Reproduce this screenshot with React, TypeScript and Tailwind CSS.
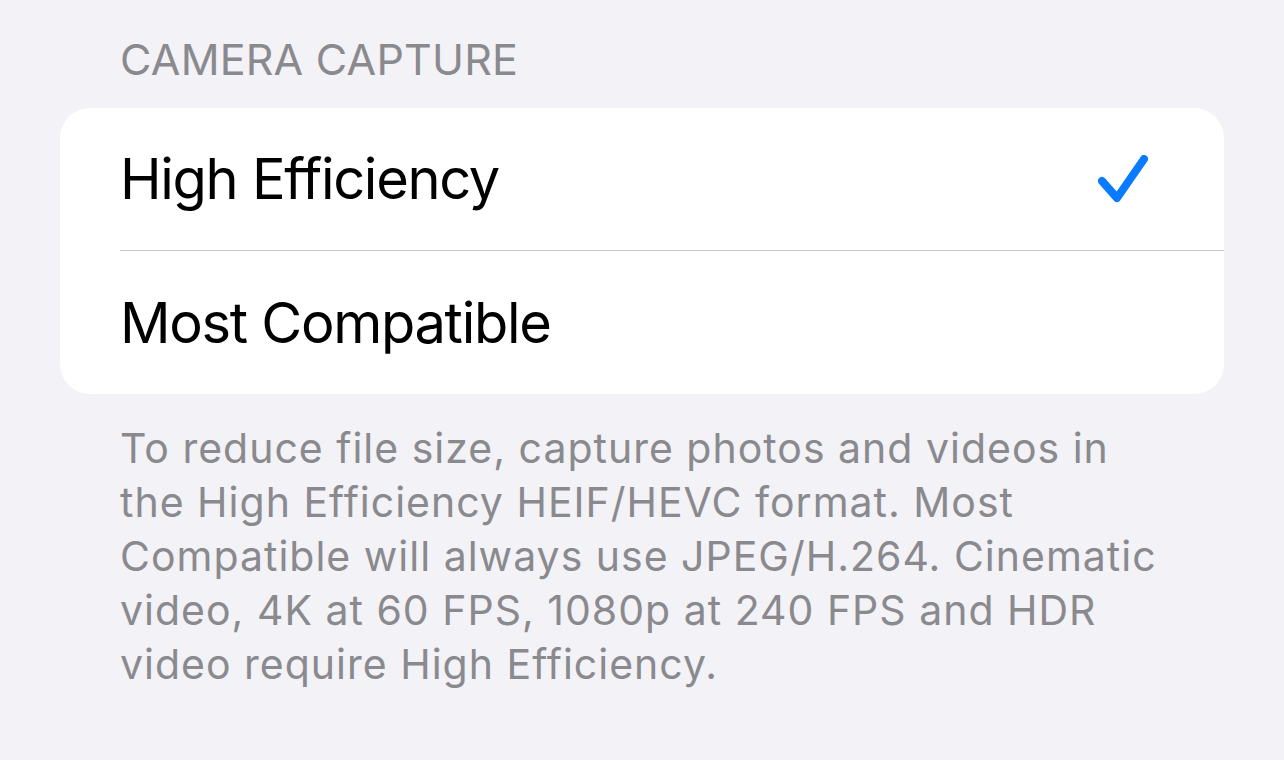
export default function App() {
  const options = [
    { label: "High Efficiency", selected: true },
    { label: "Most Compatible", selected: false },
  ];

  return (
    <div
      className="min-h-screen w-full bg-[#f2f2f7] px-[60px] pt-[33px]"
      style={{ fontFamily: "Inter, 'Noto Sans', sans-serif" }}
    >
      <div className="pl-[60px] text-[43px] leading-[52px] tracking-[0.2px] text-[#8a8a8e]">
        CAMERA CAPTURE
      </div>

      <div className="mt-[23px] rounded-[30px] bg-white">
        {options.map((opt, i) => (
          <div key={opt.label} className="pl-[60px]">
            <div
              className={`flex h-[143px] items-center pr-[76px] ${
                i < options.length - 1 ? "border-b-[1.5px] border-[#c8c8cc]" : ""
              }`}
            >
              <span className="flex-1 text-[56px] leading-none tracking-[-1.3px] text-black">
                {opt.label}
              </span>
              {opt.selected && (
                <svg width="50" height="48" viewBox="0 0 50 48" fill="none">
                  <path
                    d="M4 26 L19 43 L46 4"
                    stroke="#0a7aff"
                    strokeWidth="8"
                    strokeLinecap="round"
                    strokeLinejoin="round"
                  />
                </svg>
              )}
            </div>
          </div>
        ))}
      </div>

      <p className="mt-[27px] pl-[60px] pr-[50px] text-[41px] leading-[54px] tracking-[1px] text-[#8a8a8e]">
        To reduce file size, capture photos and videos in the High Efficiency
        HEIF/HEVC format. Most Compatible will always use JPEG/H.264. Cinematic
        video, 4K at 60 FPS, 1080p at 240 FPS and HDR video require High
        Efficiency.
      </p>
    </div>
  );
}
